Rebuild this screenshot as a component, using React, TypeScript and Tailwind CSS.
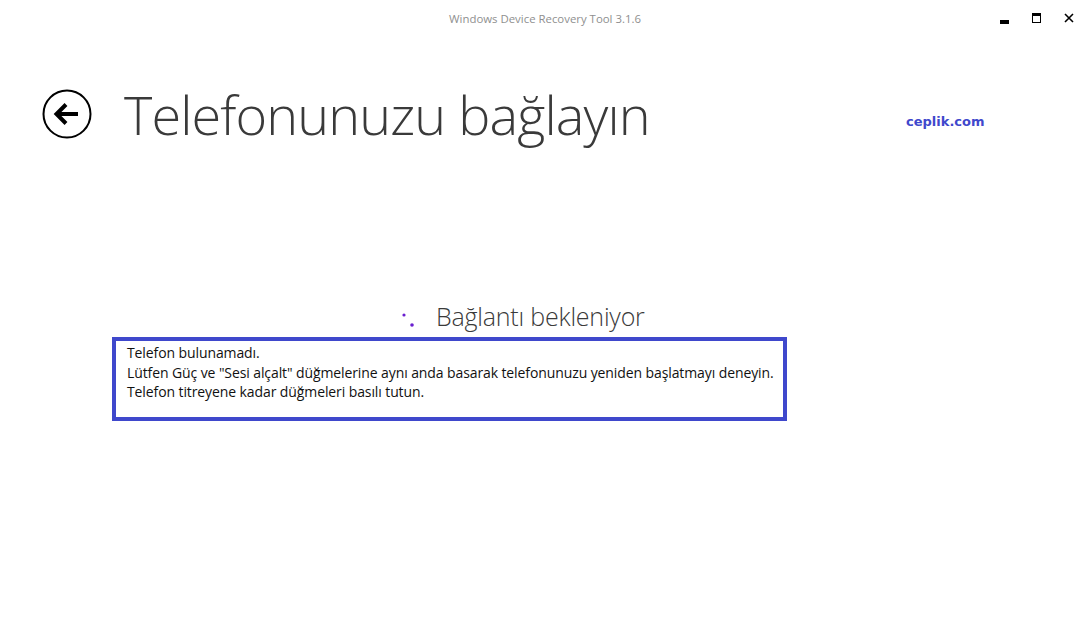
import React from "react";

const font = "font-['Open_Sans','Noto_Sans',sans-serif]";

const BackButton = () => (
  <button className="flex h-[50px] w-[50px] shrink-0 items-center justify-center">
    <svg width="50" height="50" viewBox="0 0 50 50" fill="none">
      <circle cx="25" cy="25" r="23.5" stroke="#000" strokeWidth="2" />
      <path d="M14 25h22" stroke="#000" strokeWidth="4" />
      <path d="M24 15.5 14.5 25l9.5 9.5" stroke="#000" strokeWidth="4" strokeLinejoin="miter" />
    </svg>
  </button>
);

const App = () => {
  return (
    <div className={`relative h-[632px] w-[1090px] overflow-hidden bg-white ${font}`}>
      {/* title bar */}
      <div className="flex h-[36px] items-start">
        <div className="flex-1 pt-[10px] text-center text-[11.4px] text-[#8f8f8f]">
          Windows Device Recovery Tool 3.1.6
        </div>
      </div>
      <div className="absolute right-[16px] top-[12px] flex items-center gap-[23px]">
        <div className="mt-[8px] h-[4px] w-[9px] bg-black" />
        <div className="h-[10px] w-[9px] border border-black border-t-[3px]" />
        <svg width="10" height="10" viewBox="0 0 10 10">
          <path d="M1 1l8 8M9 1l-8 8" stroke="#000" strokeWidth="1.6" />
        </svg>
      </div>

      {/* header */}
      <div className="flex items-center pl-[42px] pt-[50px]">
        <BackButton />
        <h1 className="ml-[32px] text-[54px] font-light leading-[56px] tracking-[-0.9px] text-[#3a3a3a]">
          Telefonunuzu bağlayın
        </h1>
      </div>
      <div className="absolute left-[906px] top-[112px] font-['DejaVu_Sans',sans-serif] text-[13px] font-bold text-[#3f48cc]">
        ceplik.com
      </div>

      {/* status */}
      <div className="mt-[161px] flex h-[28px] items-center pl-[400px]">
        <svg width="20" height="24" viewBox="0 0 20 24">
          <circle cx="4" cy="10" r="1.6" fill="#6a1fd0" />
          <circle cx="12" cy="20" r="1.8" fill="#6a1fd0" />
        </svg>
        <span className="ml-[16px] text-[25px] font-light tracking-[-0.2px] text-[#3a3a3a]">Bağlantı bekleniyor</span>
      </div>

      <div className="ml-[112px] mt-[6px] h-[84px] w-[675px] whitespace-nowrap border-[4px] border-[#3f48cc] pl-[11px] pt-[2px] text-[14px] leading-[19.5px] tracking-[-0.1px] text-[#111]">
        <p>Telefon bulunamadı.</p>
        <p>Lütfen Güç ve "Sesi alçalt" düğmelerine aynı anda basarak telefonunuzu yeniden başlatmayı deneyin.</p>
        <p>Telefon titreyene kadar düğmeleri basılı tutun.</p>
      </div>
    </div>
  );
};

export default App;
